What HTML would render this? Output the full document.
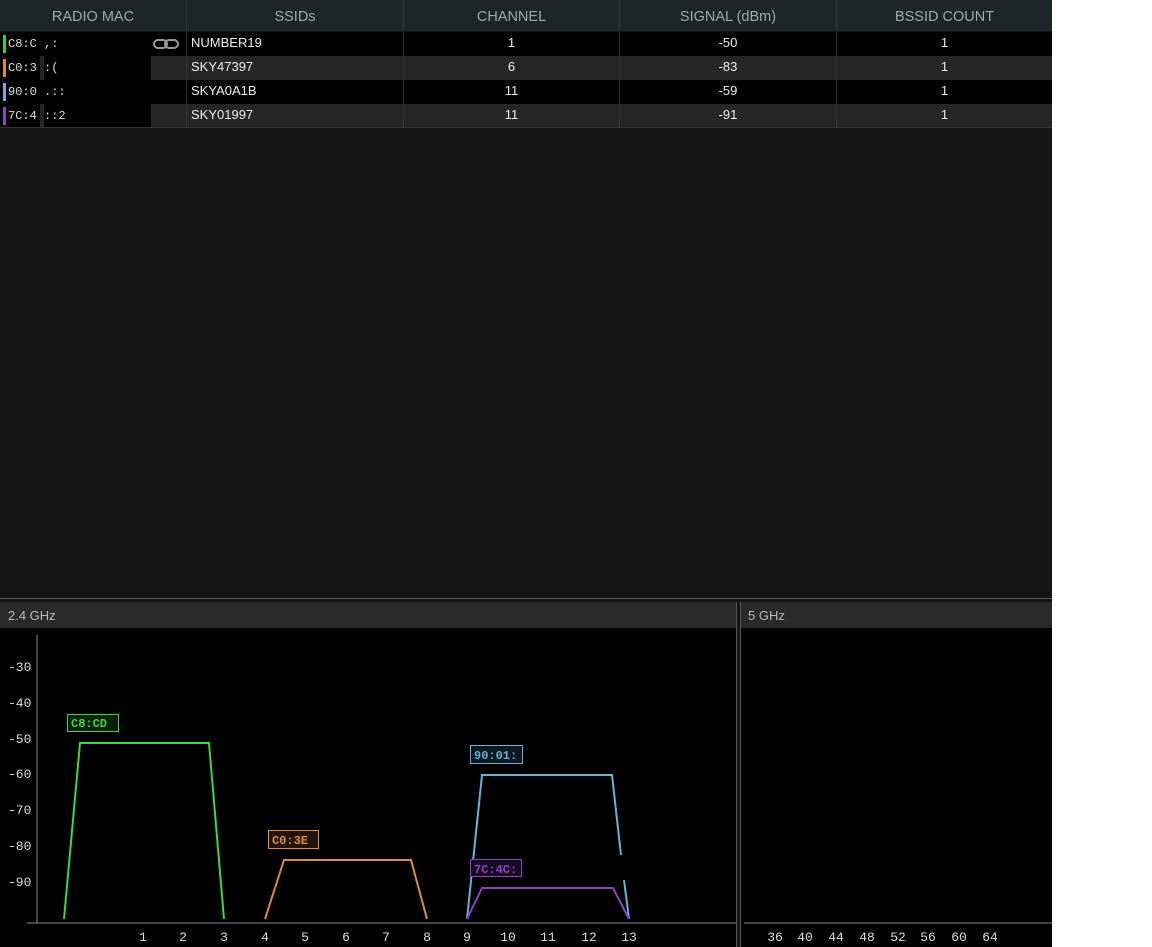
<!DOCTYPE html>
<html><head><meta charset="utf-8"><style>
html,body{margin:0;padding:0;background:#fff;width:1152px;height:947px;overflow:hidden}
#app{position:absolute;left:0;top:0;width:1052px;height:947px;background:#141414}
.hdr{position:absolute;top:0;height:31px;background:#1f2527;color:#9aabab;font:14.5px "Liberation Sans",sans-serif;line-height:34px;text-align:center;border-right:1px solid #333}
.row{position:absolute;left:0;width:1052px;height:24px;font:13px "Liberation Sans",sans-serif;color:#eee;line-height:22px}
.c{position:absolute;top:0;height:23px;text-align:center}
.mac{position:absolute;left:3px;top:3px;width:3px;height:18px}
.mt{position:absolute;left:8px;top:0;font:12px "Liberation Mono",monospace;line-height:24px;color:#ddd}
.ph{position:absolute;top:602px;height:26px;background:#2a2a2a;color:#bbb;font:13px "Liberation Sans",sans-serif;line-height:28px;padding-left:8px;box-sizing:border-box}
</style></head><body><div id="app">
<div style="position:absolute;left:0;top:0;width:1052px;height:1px;background:#444"></div>
<div class="hdr" style="left:0;width:186px;padding-right:0">RADIO MAC</div>
<div class="hdr" style="left:187px;width:216px">SSIDs</div>
<div class="hdr" style="left:404px;width:215px">CHANNEL</div>
<div class="hdr" style="left:620px;width:216px">SIGNAL (dBm)</div>
<div class="hdr" style="left:837px;width:215px;border-right:none">BSSID COUNT</div>

<div class="row" style="top:32px;background:#000">
 <div class="mac" style="background:#3ccf3c"></div><div class="mt">C8:C ,:</div>
 <svg style="position:absolute;left:153px;top:6px" width="28" height="12"><rect x="1" y="2" width="13" height="8" rx="4" fill="none" stroke="#999" stroke-width="2"/><rect x="12" y="2" width="13" height="8" rx="4" fill="none" stroke="#999" stroke-width="2"/></svg>
 <div class="c" style="left:187px;width:216px;text-align:left;padding-left:4px;box-sizing:border-box">NUMBER19</div>
 <div class="c" style="left:404px;width:215px">1</div><div class="c" style="left:620px;width:216px">-50</div><div class="c" style="left:837px;width:215px">1</div>
</div>
<div class="row" style="top:56px;background:#262626">
 <div style="position:absolute;left:0;top:0;width:151px;height:24px;background:#000"></div>
 <div style="position:absolute;left:40px;top:0;width:4px;height:24px;background:#262626"></div>
 <div style="position:absolute;left:58px;top:0;width:93px;height:24px;background:#000"></div>
 <div class="mac" style="background:#e08a40"></div><div class="mt">C0:3 :(</div>
 <div class="c" style="left:187px;width:216px;text-align:left;padding-left:4px;box-sizing:border-box">SKY47397</div>
 <div class="c" style="left:404px;width:215px">6</div><div class="c" style="left:620px;width:216px">-83</div><div class="c" style="left:837px;width:215px">1</div>
</div>
<div class="row" style="top:80px;background:#000">
 <div class="mac" style="background:#6aaed8"></div><div class="mt">90:0 .::</div>
 <div class="c" style="left:187px;width:216px;text-align:left;padding-left:4px;box-sizing:border-box">SKYA0A1B</div>
 <div class="c" style="left:404px;width:215px">11</div><div class="c" style="left:620px;width:216px">-59</div><div class="c" style="left:837px;width:215px">1</div>
</div>
<div class="row" style="top:104px;background:#262626">
 <div style="position:absolute;left:0;top:0;width:151px;height:24px;background:#000"></div>
 <div style="position:absolute;left:40px;top:0;width:4px;height:24px;background:#262626"></div>
 <div style="position:absolute;left:58px;top:0;width:93px;height:24px;background:#000"></div>
 <div class="mac" style="background:#9040c0"></div><div class="mt">7C:4 ::2</div>
 <div class="c" style="left:187px;width:216px;text-align:left;padding-left:4px;box-sizing:border-box">SKY01997</div>
 <div class="c" style="left:404px;width:215px">11</div><div class="c" style="left:620px;width:216px">-91</div><div class="c" style="left:837px;width:215px">1</div>
</div>
<div style="position:absolute;left:186px;top:32px;width:1px;height:96px;background:#333"></div>
<div style="position:absolute;left:403px;top:32px;width:1px;height:96px;background:#333"></div>
<div style="position:absolute;left:619px;top:32px;width:1px;height:96px;background:#333"></div>
<div style="position:absolute;left:836px;top:32px;width:1px;height:96px;background:#333"></div>
<div style="position:absolute;left:0;top:127px;width:1052px;height:1px;background:#333"></div>
<div style="position:absolute;left:0;top:598px;width:1052px;height:1px;background:#555"></div>

<div class="ph" style="left:0;width:736px">2.4 GHz</div>
<div class="ph" style="left:740px;width:312px">5 GHz</div>
<div style="position:absolute;left:736px;top:602px;width:1px;height:345px;background:#555"></div>
<div style="position:absolute;left:740px;top:602px;width:1px;height:345px;background:#555"></div>

<svg style="position:absolute;left:0;top:628px" width="736" height="319">
<rect width="736" height="319" fill="#000"/>
<g transform="translate(0,-628)" font-family="Liberation Mono,monospace" font-size="13" fill="#ddd">
<line x1="37" y1="635" x2="37" y2="923" stroke="#888"/>
<line x1="27" y1="923" x2="736" y2="923" stroke="#888"/>
<text x="8" y="671">-30</text><text x="8" y="707">-40</text><text x="8" y="743">-50</text><text x="8" y="778">-60</text><text x="8" y="814">-70</text><text x="8" y="850">-80</text><text x="8" y="886">-90</text>
<g text-anchor="middle">
<text x="143" y="941">1</text><text x="183" y="941">2</text><text x="224" y="941">3</text><text x="265" y="941">4</text><text x="305" y="941">5</text><text x="346" y="941">6</text><text x="386" y="941">7</text><text x="427" y="941">8</text><text x="467" y="941">9</text><text x="508" y="941">10</text><text x="548" y="941">11</text><text x="589" y="941">12</text><text x="629" y="941">13</text>
</g>
<polyline points="64,919 80,743 209,743 224,919" fill="none" stroke="#3cd83c" stroke-width="2"/>
<polyline points="265,919 284,860 411,860 427,919" fill="none" stroke="#e08a40" stroke-width="2"/>
<polyline points="467,919 482,775 612,775 621,855" fill="none" stroke="#6ab0d8" stroke-width="2"/>
<line x1="624" y1="880" x2="629" y2="919" stroke="#6ab0d8" stroke-width="2"/>
<polyline points="467,919 482,888 613,888 629,919" fill="none" stroke="#9040c8" stroke-width="2"/>
<g font-family="Liberation Mono,monospace" font-weight="bold" font-size="12">
<rect x="67.5" y="714.5" width="51" height="17" fill="#0a200a" stroke="#3cd83c"/><text x="71" y="727" fill="#3cd83c">C8:CD</text>
<rect x="268.5" y="830.5" width="50" height="18" fill="#201408" stroke="#e08a40"/><text x="272" y="844" fill="#e08a40">C0:3E</text>
<rect x="470.5" y="745.5" width="52" height="18" fill="#0a1822" stroke="#6ab0d8"/><text x="474" y="759" fill="#6ab0d8">90:01:</text>
<rect x="470.5" y="859.5" width="51" height="17" fill="#180a22" stroke="#9040c8"/><text x="474" y="873" fill="#9040c8">7C:4C:</text>
</g>
</g></svg>

<svg style="position:absolute;left:741px;top:628px" width="311" height="319">
<rect width="311" height="319" fill="#000"/>
<g transform="translate(-741,-628)" font-family="Liberation Mono,monospace" font-size="13" fill="#ddd" text-anchor="middle">
<line x1="744" y1="923" x2="1052" y2="923" stroke="#888"/>
<text x="775" y="941">36</text><text x="805" y="941">40</text><text x="836" y="941">44</text><text x="867" y="941">48</text><text x="898" y="941">52</text><text x="928" y="941">56</text><text x="959" y="941">60</text><text x="990" y="941">64</text>
</g></svg>
</div></body></html>
